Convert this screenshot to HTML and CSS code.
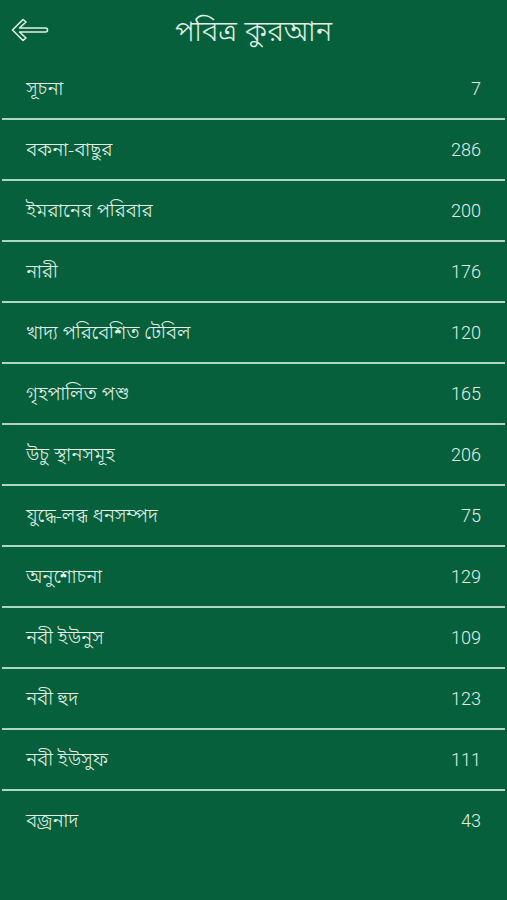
FILE: index.html
```html
<!DOCTYPE html>
<html lang="bn">
<head>
<meta charset="utf-8">
<link rel="stylesheet" href="styles.css">
</head>
<body>
<div class="app">
  <header class="topbar">
    <span class="back">
      <svg width="38" height="26" viewBox="0 0 38 26" fill="none" stroke="#e2efe6" stroke-width="1.6" stroke-linejoin="round" stroke-linecap="round">
        <path d="M12 2.5 L15 5 L8.5 11 H34.5 A2 2 0 0 1 34.5 15 H8.5 L15 21 L12 23.5 L1.5 13 Z"/>
      </svg>
    </span>
    <h1 class="title">পবিত্র কুরআন</h1>
  </header>
  <ul class="list">
    <li class="row"><span class="name">সূচনা</span><span class="count">7</span></li>
    <li class="row"><span class="name">বকনা-বাছুর</span><span class="count">286</span></li>
    <li class="row"><span class="name">ইমরানের পরিবার</span><span class="count">200</span></li>
    <li class="row"><span class="name">নারী</span><span class="count">176</span></li>
    <li class="row"><span class="name">খাদ্য পরিবেশিত টেবিল</span><span class="count">120</span></li>
    <li class="row"><span class="name">গৃহপালিত পশু</span><span class="count">165</span></li>
    <li class="row"><span class="name">উচু স্থানসমূহ</span><span class="count">206</span></li>
    <li class="row"><span class="name">যুদ্ধে-লব্ধ ধনসম্পদ</span><span class="count">75</span></li>
    <li class="row"><span class="name">অনুশোচনা</span><span class="count">129</span></li>
    <li class="row"><span class="name">নবী ইউনুস</span><span class="count">109</span></li>
    <li class="row"><span class="name">নবী হুদ</span><span class="count">123</span></li>
    <li class="row"><span class="name">নবী ইউসুফ</span><span class="count">111</span></li>
    <li class="row last"><span class="name">বজ্রনাদ</span><span class="count">43</span></li>
  </ul>
</div>
</body>
</html>
```
FILE: styles.css
```css
html, body {
  margin: 0;
  padding: 0;
  background: #05603b;
}
.app {
  width: 507px;
  height: 900px;
  background: #05603b;
  color: #e2efe6;
  font-family: "Noto Sans", "Noto Sans Bengali", Roboto, sans-serif;
  overflow: hidden;
}
.topbar {
  position: relative;
  height: 59px;
  display: flex;
  align-items: center;
  justify-content: center;
}
.back {
  position: absolute;
  left: 11px;
  top: 17px;
  display: flex;
}
.title {
  margin: 0;
  font-size: 28.5px;
  font-weight: 300;
  line-height: 1;
  padding-top: 2px;
}
.list {
  list-style: none;
  margin: 0;
  padding: 0;
}
.row {
  height: 59px;
  margin: 0 2px;
  border-bottom: 2px solid #b0d6bf;
  display: flex;
  align-items: center;
  justify-content: space-between;
  padding: 0 24px 0 24px;
}
.row.last {
  border-bottom: none;
}
.name {
  font-size: 19px;
  font-weight: 300;
}
.count {
  font-family: Roboto, sans-serif;
  font-size: 18px;
  font-weight: 300;
}
```
